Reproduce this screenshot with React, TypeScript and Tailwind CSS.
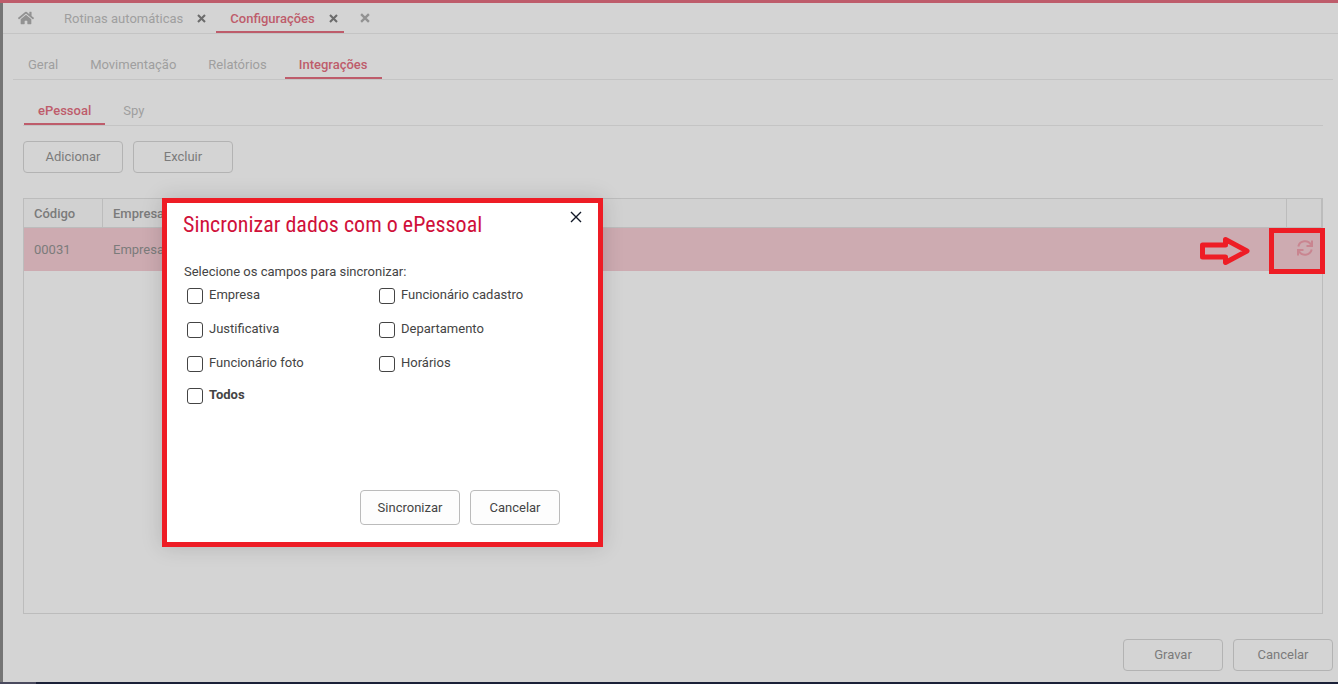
import { useState } from 'react'
import { clsx } from 'clsx'
import { FaHome } from 'react-icons/fa'

type TabProps = {
  label: string
  active?: boolean
  closable?: boolean
}

const sections = ['Geral', 'Movimentação', 'Relatórios', 'Integrações']
const integrations = ['ePessoal', 'Spy']

const syncFields = [
  'Empresa',
  'Funcionário cadastro',
  'Justificativa',
  'Departamento',
  'Funcionário foto',
  'Horários',
]

function CloseIcon({ className }: { className: string }) {
  return (
    <svg viewBox="0 0 9 9" className={className} fill="none" stroke="currentColor" strokeWidth="2.1">
      <path d="M1 1l7 7M8 1L1 8" />
    </svg>
  )
}

function RefreshIcon() {
  return (
    <svg viewBox="0 0 16 16" className="size-4" fill="none" stroke="currentColor" strokeWidth="2">
      <path d="M1.300 6.500A6.900 6.900 0 0 1 14 4.800M14.700 9.500A6.900 6.900 0 0 1 2 11.200" />
      <path d="M15 0.500V6H9.500M1 15.500V10H6.500" />
    </svg>
  )
}

function Tab({ label, active, closable }: TabProps) {
  return (
    <div
      className={clsx(
        'flex h-[30px] items-center border-b-2 pl-3.5',
        closable ? 'gap-3.5 pr-1.5' : 'pr-3.5',
        active ? 'border-[#be5c6b] font-medium text-[#be5c6b]' : 'border-transparent text-[#9f9f9f]',
      )}
    >
      <button type="button" role="tab" aria-selected={!!active} className="pt-[3px]">
        {label}
      </button>
      {closable && (
        <button type="button" aria-label={`Fechar ${label}`} className="pt-0.5 text-[#6c6c6c]">
          <CloseIcon className="size-[9px]" />
        </button>
      )}
    </div>
  )
}

function ActionButton({ label }: { label: string }) {
  return (
    <button
      type="button"
      className="h-8 w-[100px] rounded border border-[#b3b3b3] text-[#7b7b7b]"
    >
      {label}
    </button>
  )
}

function SyncCheckbox({ label, bold }: { label: string; bold?: boolean }) {
  const [checked, setChecked] = useState(false)

  return (
    <label className={clsx('flex h-4 items-start gap-1.5', bold && 'font-bold')}>
      <input
        type="checkbox"
        checked={checked}
        onChange={(e) => setChecked(e.target.checked)}
        className="size-4 shrink-0 appearance-none rounded-[3px] border border-[#444] bg-white checked:bg-[#c8193c]"
      />
      <span className="leading-[14px]">{label}</span>
    </label>
  )
}

function SyncDialog() {
  return (
    <div
      role="dialog"
      aria-labelledby="sync-title"
      className="absolute top-[195px] left-[162px] w-[441px] border-[5px] border-[#ee1c25] bg-white px-4 pt-2 pb-[17px] text-[#444] shadow-[0_0_20px_rgba(0,0,0,0.15)]"
    >
      <div className="flex items-start justify-between">
        <h2
          id="sync-title"
          className="font-['Roboto_Condensed','Liberation_Sans_Narrow','Roboto',sans-serif] text-[22px] leading-7 text-[#d0103a]"
        >
          Sincronizar dados com o ePessoal
        </h2>
        <button type="button" aria-label="Fechar" className="text-[#111827]">
          <svg viewBox="0 0 12 12" className="size-3" stroke="currentColor" strokeWidth="1.4">
            <path d="M1 1l10 10M11 1L1 11" />
          </svg>
        </button>
      </div>

      <p className="mt-[25px] pl-px leading-4">Selecione os campos para sincronizar:</p>

      <div className="mt-2 grid grid-cols-[192px_1fr] gap-y-[18px] pl-1">
        {syncFields.map((field) => (
          <SyncCheckbox key={field} label={field} />
        ))}
      </div>
      <div className="mt-4 pl-1">
        <SyncCheckbox label="Todos" bold />
      </div>

      <div className="mt-[86px] flex justify-end gap-2.5 pr-[22px]">
        <button type="button" className="h-[35px] w-[100px] rounded border border-[#bbb] bg-[#fdfdfd]">
          Sincronizar
        </button>
        <button type="button" className="h-[35px] w-[90px] rounded border border-[#bbb] bg-[#fdfdfd]">
          Cancelar
        </button>
      </div>
    </div>
  )
}

export default function App() {
  return (
    <div className="relative flex min-h-screen flex-col border-t-[3px] border-[#be5c6b] bg-[#d4d4d4] font-['Roboto',sans-serif] text-[13px]">
      <div className="flex flex-1 flex-col border-l-[3px] border-[#757575]">
        {/* Open windows */}
        <nav role="tablist" className="flex gap-1 border-b border-[#c4c4c4] pl-px">
          <button type="button" aria-label="Início" className="pr-3 pl-3.5 text-[#929292]">
            <FaHome className="size-4" />
          </button>
          <Tab label="Rotinas automáticas" closable />
          <Tab label="Configurações" active closable />
          <button type="button" aria-label="Fechar todas" className="px-3 text-[#929292]">
            <CloseIcon className="size-2.5" />
          </button>
        </nav>

        <div className="flex flex-1 flex-col pt-[15px] pr-[5px] pb-[11px] pl-2.5">
          <nav role="tablist" className="flex gap-1 border-b border-[#c4c4c4] pl-px">
            {sections.map((label) => (
              <Tab key={label} label={label} active={label === 'Integrações'} />
            ))}
          </nav>

          <div className="flex flex-1 flex-col px-2.5 pt-[15px]">
            <nav role="tablist" className="flex gap-1 border-b border-[#c4c4c4] pl-px">
              {integrations.map((label) => (
                <Tab key={label} label={label} active={label === 'ePessoal'} />
              ))}
            </nav>

            <div className="mt-[15px] flex gap-2.5">
              <ActionButton label="Adicionar" />
              <ActionButton label="Excluir" />
            </div>

            <div className="relative mt-[25px] flex-1 border border-[#bcbcbc]">
              <table className="w-full table-fixed border-separate border-spacing-0 text-left text-[#7b7b7b]">
                <thead>
                  <tr className="h-[29px] bg-[#d1d1d1]">
                    <th className="w-[79px] border-r border-b border-[#bcbcbc] px-2.5 pt-0.5 font-medium">Código</th>
                    <th className="border-r border-b border-[#bcbcbc] px-2.5 pt-0.5 font-medium">Empresa</th>
                    <th className="w-[35px] border-r border-b border-[#bcbcbc]" />
                  </tr>
                </thead>
                <tbody>
                  <tr className="h-[43px] bg-[#cdabb1]">
                    <td className="px-2.5">00031</td>
                    <td className="px-2.5">Empresa</td>
                    <td className="pb-1">
                      <button type="button" aria-label="Sincronizar" className="ml-2.5 block text-[#c98590]">
                        <RefreshIcon />
                      </button>
                    </td>
                  </tr>
                </tbody>
              </table>

              {/* Callout pointing at the sync button */}
              <div className="pointer-events-none absolute top-[29px] -right-[3px] flex items-center gap-[19px]">
                <svg viewBox="0 0 50 30" className="h-[30px] w-[50px]" fill="none" stroke="#ee1c25" strokeWidth="5">
                  <path d="M2.5 9h23V3.500L47 15 25.500 26.500V21h-23z" strokeLinejoin="round" />
                </svg>
                <span className="h-[46px] w-14 border-[5px] border-[#ee1c25]" />
              </div>
            </div>
          </div>

          <div className="mt-[25px] flex justify-end gap-2.5">
            <ActionButton label="Gravar" />
            <ActionButton label="Cancelar" />
          </div>
        </div>
      </div>

      {/* Edge of the taskbar */}
      <div className="flex h-0.5 bg-[#1a2038]">
        <span className="w-9 bg-[#4a4a5e]" />
      </div>

      <SyncDialog />
    </div>
  )
}
